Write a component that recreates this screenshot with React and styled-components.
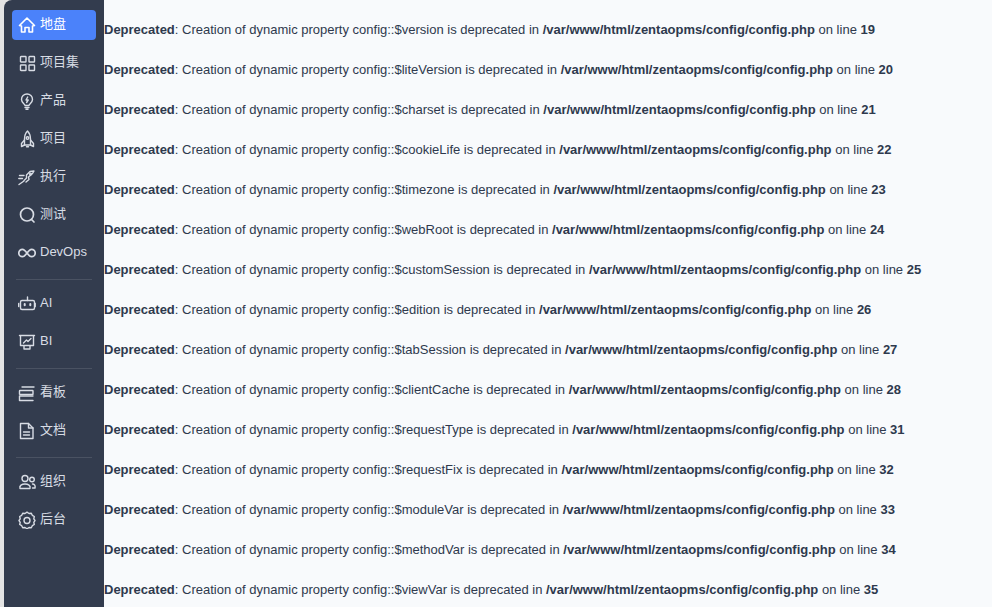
import React from "react";
import styled, { createGlobalStyle } from "styled-components";

const Global = createGlobalStyle`
  html, body { margin: 0; padding: 0; height: 100%; overflow: hidden; background: #fff; }
  #root { height: 100%; }
`;
const Shell = styled.div`
  display: flex; height: 607px; padding-left: 4px; box-sizing: border-box;
  font-family: "Liberation Sans", "Noto Sans CJK SC", sans-serif;
  background: linear-gradient(90deg, #e4e4e4, #fbfbfb);
`;
const Side = styled.nav`
  width: 100px; flex: none; background: #333c4e; border-top-left-radius: 8px;
  padding: 10px 8px 0; box-sizing: border-box; display: flex; flex-direction: column;
`;
const Item = styled.div`
  height: 30px; margin-bottom: 8px; display: flex; align-items: center; gap: 4px; padding-left: 6px;
  border-radius: 4px; font-size: 13px; line-height: 16px; color: ${p => (p.$active ? "#fff" : "#d8dce4")};
  background: ${p => (p.$active ? "#4b82fa" : "transparent")};
`;
const Label = styled.span`
  position: relative; top: -1px;
`;
const Icon = styled.svg`
  width: 18px; height: 18px; flex: none; fill: none; stroke: currentColor; stroke-width: 1.4;
  stroke-linecap: round; stroke-linejoin: round;
`;
const Divider = styled.div`
  height: 1px; background: #4a5262; margin: 3px 4px 9px;
`;
const Main = styled.main`
  flex: 1; background: #f8fafc; font-size: 13px; color: #2e394d; line-height: 20px; padding-top: 20px;
`;
const Line = styled.div`
  margin-bottom: 20px; white-space: nowrap;
`;
const nav = [
  ["地盘", <path strokeWidth="1.600" d="M1.500 9.500 9 2l7.500 7.500-2 .5v6h-3.500v-4.500H7V16H3.500v-6z" />, true],
  ["项目集", <g><rect x="2.500" y="2.500" width="5.500" height="5.500" rx=".6"/><rect x="11" y="2.500" width="5.500" height="5.500" rx=".6"/><rect x="2.500" y="11" width="5.500" height="5.500" rx=".6"/><rect x="11" y="11" width="5.500" height="5.500" rx=".6"/></g>],
  ["产品", <g><path d="M7 13.500c0-1.500-3.500-2.500-3.500-6a5.500 5.500 0 0 1 11 0c0 3.500-3.500 4.500-3.500 6z"/><path d="M9.700 5 8 8h2.200L8.600 10.500M7 15.500h4M8 17.300h2"/></g>],
  ["项目", <g><path d="M9.500 1c2.500 2.500 3 5.500 3 8v6h-6V9c0-2.500.5-5.500 3-8z"/><path d="M6.500 10 3.500 13.500v3l3-1.500M12.500 10l3 3.500v3l-3-1.500"/><circle cx="9.500" cy="8" r="1.300"/><path d="M8.500 16.800h2"/></g>],
  ["执行", <g><path d="M1 16.500 6 13M8 14l3-2.500-.5-2.500 4-3.500 1.500-2.500-4 .5-3.500 3.500 0 3-2.500 2.500M1.500 7.500H6M.8 10.500H4.500"/><circle cx="12.500" cy="6" r=".9"/></g>],
  ["测试", <g strokeWidth="1.700"><circle cx="9" cy="8.500" r="6.500"/><path d="M13.500 13.500 16 16"/></g>],
  ["DevOps", <path strokeWidth="1.700" d="M9 9c-1.500-2-2.700-3.700-4.500-3.700a3.700 3.700 0 0 0 0 7.400c1.800 0 3-1.700 4.500-3.700s2.700-3.700 4.500-3.700a3.700 3.700 0 0 1 0 7.400c-1.800 0-3-1.700-4.500-3.700z"/>],
  "div",
  ["AI", <g><rect x="2.500" y="5.500" width="14" height="9" rx="1.500"/><path d="M9.500 5.500V2M.7 8.500v3M17.800 8.500v3" /><path strokeWidth="2" d="M6.700 9v1.200M12.300 9v1.200"/></g>],
  ["BI", <g><path d="M1.500 2.500h15M2.500 2.500v10h13v-10M6 12.500V16h6v-3.500"/><path d="M5.500 10l3-3 1.500 1.500L13 5.500"/></g>],
  "div",
  ["看板", <g><path d="M4 3h12"/><rect x="1.500" y="6.500" width="13.500" height="4" rx=".5"/><path d="M15 16.500H1.500v-4.500H15"/></g>],
  ["文档", <g><path d="M2.500 1.500h8l4.500 4.500v10.500H2.500z"/><path d="M10.500 1.500V6H15M5.500 10h6M5.500 13h6"/></g>],
  "div",
  ["组织", <g><circle cx="7" cy="5.500" r="3"/><path d="M2 15.500c-1-3 2-4.500 5-4.500s6 1.500 5 4.500z"/><circle cx="14" cy="6.500" r="2.300"/><path d="M14.500 11c2 0 3 1.500 2.500 4h-2.500"/></g>],
  ["后台", <g><path d="M9 1.200l2 1.300 2.300-.2 1 2 2 1.200-.5 2.300L17 9.500l-1.200 1.800.5 2.200-2 1.200-1 2-2.300-.2-2 1.300-2-1.300-2.300.2-1-2-2-1.200.5-2.200L1 9.500l1.200-1.700-.5-2.300 2-1.200 1-2 2.300.2z"/><circle cx="9" cy="9.500" r="3"/></g>],
];
const rows = [
  ["version", 19], ["liteVersion", 20], ["charset", 21], ["cookieLife", 22], ["timezone", 23],
  ["webRoot", 24], ["customSession", 25], ["edition", 26], ["tabSession", 27], ["clientCache", 28],
  ["requestType", 31], ["requestFix", 32], ["moduleVar", 33], ["methodVar", 34], ["viewVar", 35],
];
export default function App() {
  return (
    <Shell>
      <Global />
      <Side>
        {nav.map((n, i) => n === "div" ? <Divider key={i} /> : (
          <Item key={i} $active={n[2]}>
            <Icon viewBox="0 0 18 18">{n[1]}</Icon>
            <Label>{n[0]}</Label>
          </Item>
        ))}
      </Side>
      <Main>
        {rows.map(([k, l]) => (
          <Line key={k}>
            <b>Deprecated</b>: Creation of dynamic property config::${k} is deprecated in <b>/var/www/html/zentaopms/config/config.php</b> on line <b>{l}</b>
          </Line>
        ))}
      </Main>
    </Shell>
  );
}
